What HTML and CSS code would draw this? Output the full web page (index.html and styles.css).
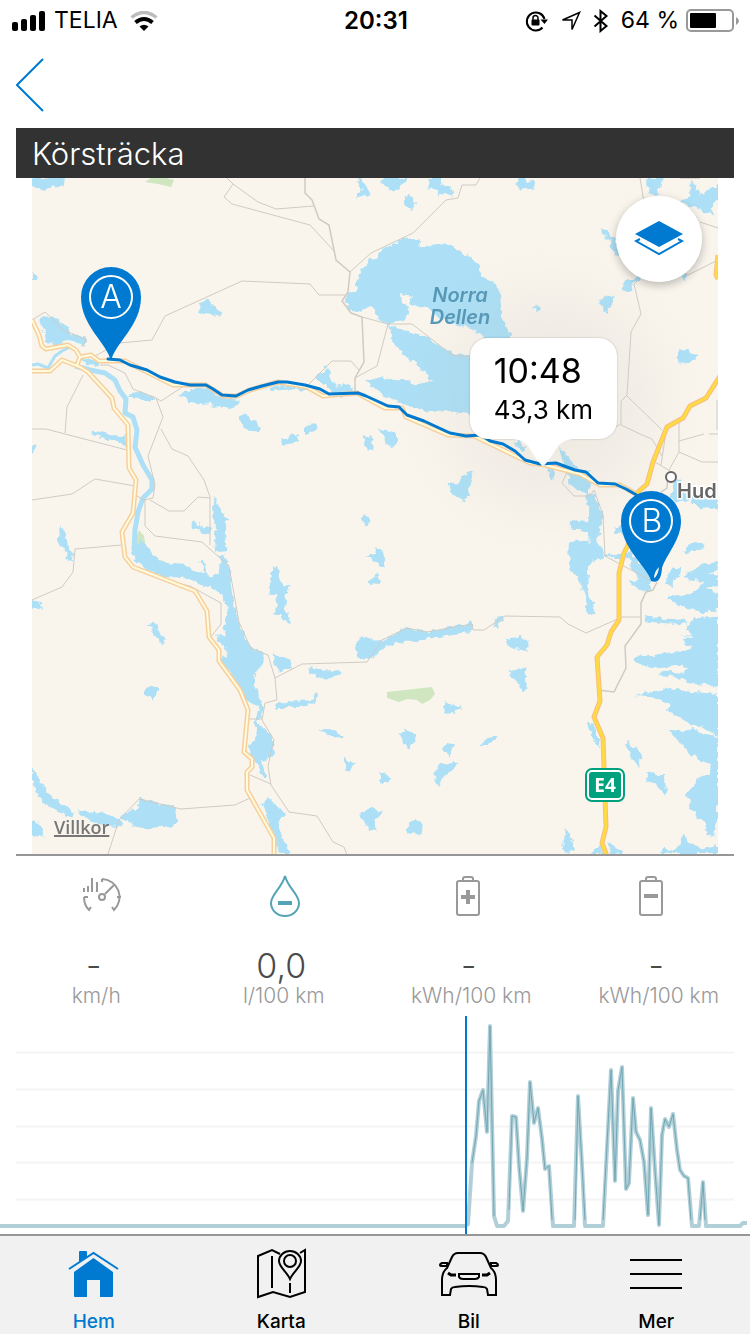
FILE: index.html
```html
<!DOCTYPE html>
<html lang="sv">
<head>
<meta charset="utf-8">
<meta name="viewport" content="width=device-width, initial-scale=1">
<title>Körsträcka</title>
<link rel="stylesheet" href="styles.css">
</head>
<body>
<div class="status">
  <div class="status-left">
    <svg width="34" height="20" viewBox="0 0 34 20" aria-hidden="true"><rect x="0" y="11" width="6" height="9" rx="2"/><rect x="9" y="8" width="6" height="12" rx="2"/><rect x="18" y="4" width="6" height="16" rx="2"/><rect x="27" y="0" width="6" height="20" rx="2"/></svg>
    <span>TELIA</span>
    <svg class="wifi" width="28" height="20" viewBox="0 0 28 20" aria-hidden="true"><path d="M1.500 6.500Q14-3.500 26.500 6.500" fill="none" stroke="#bdbdbd" stroke-width="3.500"/><path d="M5.500 11.500Q14 4.500 22.500 11.500" fill="none" stroke="#000" stroke-width="4"/><path d="M9.500 15.500Q14 12 18.500 15.500L14 20z"/></svg>
  </div>
  <time class="clock">20:31</time>
  <div class="status-right">
    <svg width="24" height="22" viewBox="0 0 24 22" aria-hidden="true"><path d="M17.500 17.500A9 9 0 1 1 19.500 9" fill="none" stroke="#000" stroke-width="2"/><path d="M15.500 9.500h7.500l-3.500 4.500z"/><rect x="6.500" y="9.500" width="8" height="6" rx="1"/><path d="M8 10V8a2.500 2.500 0 0 1 5 0v2" fill="none" stroke="#000" stroke-width="1.500"/></svg>
    <svg width="20" height="20" viewBox="0 0 20 20" aria-hidden="true"><path d="M1.500 9L18.500 1.500 11 18.500V9z" fill="none" stroke="#000" stroke-width="1.500"/></svg>
    <svg width="16" height="24" viewBox="0 0 16 24" aria-hidden="true"><path d="M1.500 6.500L13.500 17 7.500 22V2l6 5L1.500 17.500" fill="none" stroke="#000" stroke-width="2"/></svg>
    <span>64 %</span>
    <svg width="54" height="24" viewBox="0 0 54 24" aria-hidden="true"><rect x="1" y="1" width="46" height="21" rx="4" fill="none" stroke="#999" stroke-width="2"/><rect x="4" y="4" width="26" height="15" rx="1"/><path d="M50 8v8q6-4 0-8" fill="#999"/></svg>
  </div>
</div>
<header class="nav">
  <button class="back" aria-label="Tillbaka"><svg width="28" height="54" viewBox="0 0 28 54"><path d="M27 1L1 27l26 26" fill="none" stroke="#007ad0" stroke-width="2"/></svg></button>
</header>
<main>
  <h1 class="title">Körsträcka</h1>
  <section class="map-frame" aria-label="Karta">
    <div class="map">
      <svg class="map-art" viewBox="32 178 686 676">
        <defs>
          <radialGradient id="shade"><stop offset="0" stop-color="#a09a96" stop-opacity=".15"/><stop offset=".5" stop-color="#a09a96" stop-opacity=".08"/><stop offset="1" stop-color="#a09a96" stop-opacity="0"/></radialGradient>
          <filter id="shoreline" x="0" y="0" width="1" height="1"><feTurbulence type="fractalNoise" baseFrequency=".16" numOctaves="2" seed="4"/><feDisplacementMap in="SourceGraphic" scale="7" xChannelSelector="R" yChannelSelector="G"/></filter>
        </defs>
        <rect x="32" y="178" width="686" height="676" fill="#f9f5ed"/>
        <g fill="#cfe6c1">
          <path d="M151 178l-6 4 13 2 13 3 3-7-8-2zM139 530l5 6 1 7-4 8-5 1V538zM387 692l45-5 3 7-5 6-8 4-5-4-10-1-8 3-12-4z"/>
        </g>
        <g fill="#ade0f6" filter="url(#shoreline)">
          <path d="M32 178v9l5 1 6 2 6-2 9-1 6-2 1-7zM32 272l5 4v3h-5zM43 314l5 4 5-2 14 12 8 8h10l2 5-4 7-3-5-7-3-13 4h-8l-6-3-1-8-4-8zM82 358l8 1 8 3-3 4-8-1zM128 396l7-4 12 1 8 6-2 3h-8l-7-4zM178 396l10-5 10-3 10 1 10 7 14 2 8 3-4 5-6 3-15-3-10-2-15-2-4-4zM197 313l4-10 7-4 4 6 5 4 7 3-3 5-8-2-8-1z"/>
          <g transform="translate(240 178) scale(.33333)">
            <path d="M350 5l10-5 15 18 5 18 15 6-5 12-22 2-18 6 10-18 5-12zM422 8l8-8h68l5 10-20 16-25 12-18-14zM565 0h35l5 18 25 8 10 16-5 14-20-8-16 4-24-24-18 14 12-22zM492 62l22-8 14 22-15 24-18-12z"/>
            <path d="M480 190L490 182 510 178 535 188 540 205 575 203 620 197 640 208 690 238 715 260 720 285 745 305 765 315 780 345 784 400 796 440 815 480 770 510 735 480 720 465 690 450 650 440 600 420 575 400 545 385 520 385 505 375 512 360 495 350 483 348 486 375 510 388 500 420 470 432 440 438 410 422 405 395 385 388 367 392 362 403 330 398 318 370 320 345 350 335 352 305 370 265 385 248 408 242 415 222 440 205z"/>
            <path d="M445 440L500 460 560 475 600 505 640 528 700 530V712L620 697 560 700 500 682 440 655 400 630 378 607 420 597 500 607 530 620 575 610 555 580 490 530 455 485z"/>
            <path d="M225 590l20-5 15-20 10 15-2 16 20 30 25-8 28 10v22l-30 5-35-12-20-20-25-18zM90 625l50 0 60 5-20 8-40-3-50 3zM0 715l18-8 12 16 22 12 8 18-22 4-20-16-18 0zM192 755l14-16 22 4-6 14-14 12-14-2zM412 752l28 4 24 16-8 12h-16l-4-18z"/>
          </g>
          <g transform="translate(460 178) scale(.33333)">
            <path d="M165 15l20-15 18 6 16 4-4 30-14-8-20 3zM560 0h48l-4 30-18 22-20-6zM625 62l25 10 24-8 18-12-8-28 10-16 18 12-2 20 12 8 24-12 36-28v50l-22 20-4 34-20-6-20-12-22-10-36-10zM427 152l14 4 8 16 16 10 8 20 8 36-24-18-6-28-22-20zM490 312l28-10 18-12 14 8-30 20-4 16-22 4-4-10zM416 368l22-16 8 6 18-6-8 28-12 14-4 10-16-18zM220 390l12-10 12 6-4 8-14 8zM656 515l28-2 8 14 22 4-14 14-18 14-24-6zM660 285l14-4 8 14-8 12z"/>
          </g>
          <g transform="translate(20 400) scale(.33333)">
            <path d="M658 65l14-25 8 18 12 18 28 10-12 8-22-2-12-10zM215 92l30 4 30 10 40 2 8 26-16-2-28-12-22 4-12-10-30-12zM36 138l14-2-4 16-10 4zM120 378l16 22-4 18 14 24 16 18-4 26-14 0-8-12 4-18-18-20-8-22 8-14zM36 600l16 4 20 22-12 4-24-4zM383 680l16-16 10 10 12 24 14 22-20-2-8-20zM515 366l20 6 12 10 24-2v24l-16-4-22-12-18-6zM578 304l6-14 14 34 24 32-6 50 4 48-34 2-4-30 4-30-4-44z"/>
            <path d="M335 450L365 420 385 440 405 470 440 490 495 495 530 515 555 520 538 485 548 482 565 525 595 525 600 480 595 465 610 465 628 495 640 590 658 680 672 725H612L615 660 625 635 610 600 595 570 545 555 505 535 440 535 395 515 350 490z"/>
          </g>
          <g transform="translate(260 400) scale(.33333)">
            <path d="M64 118l18-2 14-14 14 4 8 14-20 10-32 4zM132 90l10-16 24-4 2 14-16 10-18 8zM312 108l14 4 16 6-10 16 10 18-16 0-12-20zM350 86l24 6 26 4 12 24-12 20-20-2-2-18-12-18zM564 248l18 4 14-2 14-24 14-6 18-8-8 24-8 22 4 28-16 4-8 10-30-22zM302 352l16-16 10 18-4 24-18-8zM315 470l30-6 4-22 14 6 12 26-2 30-18-14-20-12zM325 540l18-10 6-16 2 18 14 14-10 8-14 0zM38 500l14-2 2 36 14 22 22 0-8 14-8 60 16 26 2 16-24-8-4-20-20 0 6-40-2-18-20-2z"/>
            <path d="M295 718L310 708 345 722 380 718 438 682 500 695 550 685 622 672 630 660 640 690 600 702 545 710 500 718 440 725 380 735 350 765 325 780 295 770 285 745zM702 660l16-10 18 2-24 20-4 22-8-12zM740 715l40-4 28 14 0 20-40-8-26-10z"/>
          </g>
          <g transform="translate(500 400) scale(.33333)">
            <path d="M177 140l28 35 25 30 35 10 7 35-10 35-32-17-25-18-2-25-18-50zM145 205h20l-2 35-16-15zM255 290l20-15 25 45 12 35-12 35-10 40 20 25-2 20-28 10-15 15-3 60 13 40 12 40-27 0-5-50-15-45-25-35-10-50 2-35 28-5 35 5-5-25-25-10-25 0-5-30 30 2 25 3 5-30zM340 380l30-5 5 25-25 2zM310 460l40 2 35 0 10-22 5 30 40 40 15 35-10 35-35-20-25-15 35-5-30-40 5-20-35-5-45-5zM550 455l30-30 38 7-18 18-35 8zM505 290l25-55 15 5-5 30 35 20 79 10v28l-54-3-25-20-45 0zM40 125l20 0 20 20-12 8z"/>
            <path d="M500 550L505 520 520 505 545 500 540 525 515 545 520 562zM550 525L575 515 600 495 654 485V505L630 520 654 525V555L618 565 654 580V635L600 637 560 625 500 595 510 585 550 588 590 572 610 545 570 542zM385 540L420 548 455 560 445 580 410 565zM435 645L480 655 560 660V675L480 668 440 665zM535 700L575 705 560 688 575 655 654 650V780H400L480 765 560 762 570 735 545 718 580 712z"/>
          </g>
          <g transform="translate(20 630) scale(.33333)">
            <path d="M390 0h20l28 40-12 2-20-24zM372 182l8-14 38 8-18 30-22-10zM585 18L610 22 615 0H667L690 50 735 75 732 105 710 125 702 160 715 210 730 220 725 265 712 275 745 310 762 330 760 375 735 395 722 390 742 430 738 450 728 440 700 385 685 350 715 310 703 285 715 230 680 210 640 140 605 95 620 70 600 35zM757 66l20 14 40 12-2 22-32 8-20-20zM862 110l38 8 66 8-10 8-32 14-24-6-34-18zM768 224l52-10 62-4 8-24 4 6-4 24-30 12-60 6-32 0zM893 296l44 2 34 20-2 8-44-10zM972 386l14 10 24 4-14 12-4 14-20-6zM1006 45l20-24 24 6v62l-24-14zM36 410l24 40 20 36 50 40 34 22-14 14-40-22-40-20-34-54zM178 540l60 8 60 20 14 14-20 6-60-6-28-18-24-8zM300 562l50-30 8-28 50 12 60 14-2 20 10 24-24 14-80 8-44-16zM36 570l14 4 26 44-14 6-26-12zM724 520l14-18 24 14 36 36-24 20 8 40 30 60h-34l-14-46-18-50zM1020 550l30-18v64l-24-20z"/>
          </g>
          <g transform="translate(370 640) scale(.33333)">
            <path d="M405 0h30l34 12 4 22-24-4-30-8zM415 98l30-12 28-4-8 40 8 20-14 12-14-24-16-18zM221 188l20 8 34 4-24 18-26 4zM88 282l14-4 0-18 22 20 14 18-14 20-8 12-18-26zM217 324l20-14 14 4-6 24-6 16-10-16-12-6zM332 318l16-24 32-10-6 16-24 18zM190 402l20-30 54-4-14 20-32 24-10 32-14-26zM30 392l12 6 18 14-4 16-26 2zM0 500l14 4 22 10-8 18-14 8 2 28-16 4zM110 566l8-16 20-8 20 14-4 32-20-8-18 4zM765 303l20 12 30 20-10 50-20-25zM830 395l30 10 25 0 3 60-28-30-28-15zM585 565l15 25 15 40-25 8-15-13zM662 642l28-27 15 27zM715 605l45 35-40 2zM652 248l20 2 18 70-25-25z"/>
            <path d="M790 60L800 50 850 45 930 33 1000 30 945 12 950 0H1044V140L1000 135 960 130 920 110 870 105 880 95 945 98 955 85 920 78 860 85 800 70zM790 165L820 158 865 155 890 143 960 155 1044 162V290L1000 262 960 252 930 230 890 212 905 190 870 180 840 168zM895 268L940 275 965 262 1000 285 1044 290V540L1030 590 1005 588 1010 550 980 540 975 515 955 505 960 480 945 460 975 435 980 415 1020 402 1022 372 985 360 960 335 920 300zM870 642l10-22 20 15 30-15 10-40 20 30 40 15 44-10v27z"/>
          </g>
        </g>
        <g fill="none" stroke="#ade0f6" stroke-linejoin="round">
          <path d="M32 365l6-1 10 4 7-12 7-5 8-4" stroke-width="3"/>
          <path d="M75 366l15 4 15 3 10 7 5 11 6 8-1 14 8 4 4 13-2 17 8 18 9 15v9l-9 9-5 14-3 18-1 20" stroke-width="5"/>
        </g>
        <ellipse cx="550" cy="400" rx="150" ry="150" fill="url(#shade)"/>
        <g fill="none" stroke="#cfcbc3" stroke-width="1">
          <path d="M32 320l13-8 20 19 22 9-5 6M227 178l6 6-9 13 8 7 78 21 24 26M233 184l25 18 18 7 38-3M350 272l21-19 42-20 33-33 12-2 4-13h14l4-7M345 295h-26l-9-11-68-3-77 35-13 24-33 3-24 13M362 317l26 7h24l40 31 18 2M388 324l-11 42-22 12M309 384l23-23h19l8 9M83 375l-16 32-2 26M100 365h8l17 8 8 16 23 9 7 19-15 39 7 29-2 13-9 2-7-4M156 398l5 3 23-15M32 429h14l19 5 62 16M32 500l40-6 23-15 40 7M32 600l30-13 11-15 2-23 47-4M161 429l11 20 16 7 16 24 6 17v48M150 500l19 11h15l14-14 12 1M145 500v26l10 10 47 6 27 24 10 56 8 18 4 8 17 7 7 23 2 22-12 3-3 17 12 20-6 26 3 19 18 27 28 4 16 26 11 5 3 8M172 582l18 4 31 17v21l-11 14M275 678l27-14 65-2 15-22 25-12 20 4 45-8 1 6h11l21-14 55 1 8 7 18 9 36-16h18M250 719h12M250 775l21 9M108 854l11-34 20-21 42 10 54-4 15-7M640 178l4 24M637 281l-3 3 7 30-10 18-4 63-6 6v24l19 9 12 5 10 17M627 396l35 34M621 424l-15 8M718 260l-30 15-6-3M700 222l18 6M679 423v29l-10 18M679 441l25-7M709 434h9M679 452l23 10h16M717 400v30M655 462l15 9M666 432l-5 33M594 490l9 25 2 41 45 24M594 490l-4 6h-16l-12-13 6-13"/>
          <path d="M305 178v15l7 7 7 19 10 6 7 35 14 12-2 20-6 9 9 12 11 4 2 45-9 16v13M657 582l-4 8-7 2-5 11v21l-16 22 1 22-12 24-16-2M680 178h20M668 475l-1 13-6 4" stroke-width="1.500"/>
        </g>
        <g fill="none" stroke-linejoin="round">
          <path d="M32 320l7 15 3 11 4 3 22-4 8 5 4 7 11-2 8 6h26l48 24h33l17 11h14l13-6 28-8 29 5 16 9 34-3 28 15h17l4 9 42 18 26 1 23 11 33 16 15 2 35 9 20 11h20l16 9M32 371h18l12-11 18 7 8 5 24 26 2 10 14 17 1 43 7 12-3 33-11 19 3 25 8 10 62 24 12 20 2 26 10 13v11l21 29 8 20-4 42 8 7v8l-5 5v18l27 48v16M80 357l-3 8" stroke="#f7cf9d" stroke-width="5"/>
          <path d="M32 320l7 15 3 11 4 3 22-4 8 5 4 7 11-2 8 6h26l48 24h33l17 11h14l13-6 28-8 29 5 16 9 34-3 28 15h17l4 9 42 18 26 1 23 11 33 16 15 2 35 9 20 11h20l16 9M32 371h18l12-11 18 7 8 5 24 26 2 10 14 17 1 43 7 12-3 33-11 19 3 25 8 10 62 24 12 20 2 26 10 13v11l21 29 8 20-4 42 8 7v8l-5 5v18l27 48v16M80 357l-3 8" stroke="#fffbdc" stroke-width="2"/>
          <path d="M720 376l-14 22-16 8-7 12-16 9-14 35-6 22-9 8-10 53-4 8-5 20v47l-8 12-4 13-10 12 3 44-6 16 9 21 3 89-4 16 5 13M718 255l-2 20 2 4" stroke="#f7bd8a" stroke-width="5"/>
          <path d="M720 376l-14 22-16 8-7 12-16 9-14 35-6 22-9 8-10 53-4 8-5 20v47l-8 12-4 13-10 12 3 44-6 16 9 21 3 89-4 16 5 13M718 255l-2 20 2 4" stroke="#fedb3f" stroke-width="3"/>
          <path d="M108 359l12 1 10 5 17 5 13 7 15 5 15 3h16l7 4 9 6 14 1 12-6 14-4 16-4 9 0 18 3 15 4 9 5 29-1 8 3 22 10 11 1 8 8 17 6 26 12 16 3 15-1 9 6 13 3 12 7 10 9 15 4 16-1 19 7 11 2 12 11 17 1 11 5 14 8" stroke="#007ad0" stroke-width="3" stroke-linecap="round"/>
        </g>
        <circle cx="671" cy="477" r="5" fill="#fff" stroke="#666" stroke-width="2"/>
        <g class="place-label"><text x="677" y="498">Hud</text></g>
        <g class="lake-label"><text x="460" y="302">Norra</text><text x="460" y="324">Dellen</text></g>
        <rect x="586" y="769" width="38" height="32" rx="6" fill="#fff" stroke="#00a27e" stroke-width="2"/>
        <rect x="589" y="772" width="32" height="26" rx="3" fill="#00a27e"/>
        <text class="road-label" x="605" y="792">E4</text>
        <g class="pin"><path d="M111 361C107 343 81 326 81 297a30 30 0 0 1 60 0C141 326 115 343 111 361z"/><circle cx="111" cy="297" r="21"/><text x="111" y="308">A</text></g>
        <g class="pin"><path d="M651 581C648 567 621 549 621 521a30 30 0 0 1 60 0C681 540 666 555 662 568Q661 585 651 581z"/><circle cx="651" cy="521" r="21"/><text x="652" y="532">B</text><path d="M654 578q0-6 5-11q-1 9-5 11z" class="pin-gap"/></g>
      </svg>
      <button class="layers" aria-label="Kartlager"><svg width="50" height="38" viewBox="0 0 50 38"><path d="M1 14L25 1l24 13-24 13z" fill="#007ad0"/><path d="M6 19l-4 2 23 13 23-13-4-2" fill="none" stroke="#007ad0" stroke-width="2"/></svg></button>
      <div class="callout"><strong>10:48</strong><span>43,3 km</span><svg class="callout-tip" width="60" height="27" viewBox="0 0 60 27"><path d="M0 0Q10 1 15 7Q26 25 30 27Q34 25 45 7Q50 1 60 0z" fill="#fff"/></svg></div>
      <a class="terms" href="#villkor">Villkor</a>
    </div>
  </section>
  <section class="stats">
    <div class="stat-icons" aria-hidden="true">
      <svg width="44" height="44" viewBox="0 0 44 44" fill="none" stroke="#999" stroke-width="2"><path d="M4 14v4M8 12v6M12 4v14M17 8v10M22 8V5M22 5A18 18 0 0 1 34 36L32 33M41 23h-4M4 23h4M4 23q0 8 5 13l2-3M25 20l9-9"/><circle cx="22" cy="23" r="3"/></svg>
      <svg width="44" height="44" viewBox="0 0 44 44"><path d="M22 2C19 14 8 20 8 29a14 13 0 0 0 28 0C36 20 25 14 22 2z" fill="none" stroke="#55a3b6" stroke-width="2"/><path d="M15 29h14" stroke="#55a3b6" stroke-width="4"/></svg>
      <svg width="44" height="44" viewBox="0 0 44 44" fill="none" stroke="#999" stroke-width="2"><rect x="11" y="7" width="22" height="34" rx="2"/><path d="M17 7V5q0-2 2-2h6q2 0 2 2v2"/><path d="M15 23h14M22 16v14" stroke-width="4"/></svg>
      <svg width="44" height="44" viewBox="0 0 44 44" fill="none" stroke="#999" stroke-width="2"><rect x="11" y="7" width="22" height="34" rx="2"/><path d="M17 7V5q0-2 2-2h6q2 0 2 2v2"/><path d="M15 22h14" stroke-width="4"/></svg>
    </div>
    <ul class="stat-values">
      <li><span class="value">-</span><span class="unit">km/h</span></li>
      <li><span class="value">0,0</span><span class="unit">l/100 km</span></li>
      <li><span class="value">-</span><span class="unit">kWh/100 km</span></li>
      <li><span class="value">-</span><span class="unit">kWh/100 km</span></li>
    </ul>
  </section>
  <svg class="chart" viewBox="0 1016 750 218" role="img" aria-label="Förbrukning längs sträckan">
    <path d="M16 1052.500h718M16 1089.500h718M16 1126.500h718M16 1162.500h718M16 1199.500h718" stroke="#f4f4f4" stroke-width="2"/>
    <g fill="none" stroke-linejoin="round">
      <path d="M0 1226H465L468 1224 472 1163 476 1136 479 1101 483 1090 487 1132 490 1026 494 1216 497 1226H504L508 1221 512 1116 516 1117 519 1165 523 1211 527 1158 530 1082 534 1123 538 1108 542 1139 545 1169 549 1166 553 1226H574L578 1096 582 1165 585 1226H603L611 1070 615 1181 618 1091 622 1067 626 1189 629 1183 633 1098 636 1132 640 1140 644 1162 648 1215 651 1108 655 1170 659 1225 662 1135 665 1119 669 1127 673 1114 677 1150 680 1170 684 1176 688 1178 692 1226H699L703 1182 706 1226H740L743 1223H747" stroke="#b1cfd7" stroke-width="4"/>
      <path d="M472 1163L476 1136 479 1101 483 1090 487 1132 490 1026 494 1216M509 1210L512 1116 516 1117 519 1165 523 1211 527 1158 530 1082 534 1123 538 1108 542 1139 545 1169 549 1166 552 1220M575 1220L578 1096 582 1165 585 1220M603 1220L611 1070 615 1181 618 1091 622 1067 626 1189 629 1183 633 1098 636 1132 640 1140 644 1162 648 1215 651 1108 655 1170 659 1225 662 1135 665 1119 669 1127 673 1114 677 1150 680 1170 684 1176 688 1178 691 1220M700 1220L703 1182 705 1220" stroke="#71a7b5" stroke-width="1"/>
    </g>
    <path d="M466 1016v218" stroke="#007ad0" stroke-width="2"/>
  </svg>
</main>
<nav class="tabs">
  <a class="tab active" href="#hem"><svg width="56" height="56" viewBox="0 0 56 56"><path d="M8 26L27.500 12 47 26v24q0 1-1 1H34V34H21v17H9q-1 0-1-1z" fill="#007ad0"/><path d="M3 23L27.500 6.500 52 23" fill="none" stroke="#f1f1f1" stroke-width="6"/><path d="M13 16V6q0-1 1-1h6q1 0 1 1v5z" fill="#007ad0"/><path d="M3 23L27.500 7 52 23" fill="none" stroke="#007ad0" stroke-width="2"/></svg><span>Hem</span></a>
  <a class="tab" href="#karta"><svg width="56" height="56" viewBox="0 0 56 56" fill="none" stroke="#000" stroke-width="2"><path d="M27 8L19 4 5 10v41l15-5 17 5 15-5V4l-5 3M19 10v32M37 37v10"/><path d="M37 33C34 26 26 21 26 15a11 10 0 0 1 22 0C48 21 40 26 37 33z"/><circle cx="37" cy="15" r="6"/></svg><span>Karta</span></a>
  <a class="tab" href="#bil"><svg width="62" height="56" viewBox="-3 0 62 56" fill="none" stroke="#000" stroke-width="2"><path d="M17 7h22q4 0 6 4l5 11q5 4 5 12v15h-8l-1-6q-1-2-4-2-14-2-28 0-3 0-4 2l-1 6H1V34q0-8 5-12l5-11q2-4 6-4zM6 20H1q-2 0-2-1t2-2h5zM50 20h5q2 0 2-1t-2-2h-5zM18 28h20v3q-1 2-4 2H22q-3 0-4-2z"/><path d="M7 27l3 2h5M49 27l-3 2h-5" stroke-width="3"/></svg><span>Bil</span></a>
  <a class="tab" href="#mer"><svg width="56" height="56" viewBox="0 0 56 56"><path d="M2 14h52M2 28h52M2 42h52" stroke="#000" stroke-width="2"/></svg><span>Mer</span></a>
</nav>
</body>
</html>
```

FILE: styles.css
```css
* {
  box-sizing: border-box;
}

body {
  margin: 0;
  min-height: 100vh;
  display: flex;
  flex-direction: column;
  background: #fff;
  color: #000;
  font-family: Inter, "Liberation Sans", sans-serif;
}

svg {
  display: block;
  flex: none;
}

button {
  padding: 0;
  border: 0;
  background: none;
}

.status {
  display: grid;
  grid-template-columns: 1fr auto 1fr;
  align-items: center;
  height: 41px;
  padding: 0 10px 0 12px;
  font-size: 23px;
  line-height: 41px;
}

.status-left,
.status-right {
  display: flex;
  align-items: center;
}

.status-left {
  gap: 8px;
}

.wifi {
  margin-left: 4px;
}

.status-right {
  justify-content: flex-end;
  gap: 12px;
}

.status-right span {
  margin: 0 -5px 0 0;
}

.clock {
  font-size: 24px;
  font-weight: 600;
}

.nav {
  height: 87px;
  padding: 17px 16px;
}

.back {
  display: block;
}

main {
  flex: 1;
}

.title {
  margin: 0 16px;
  padding: 1px 16px 0;
  background: #323232;
  color: #fff;
  font-size: 31px;
  font-weight: 300;
  line-height: 49px;
}

.map-frame {
  margin: 0 16px;
  padding: 0 16px;
  border-bottom: 2px solid #969696;
}

.map {
  position: relative;
}

.map-art {
  width: 100%;
  height: auto;
}

.lake-label {
  fill: #5798b6;
  font-size: 20px;
  font-style: italic;
  font-weight: 600;
  text-anchor: middle;
}

.place-label {
  fill: #666;
  stroke: #fff;
  stroke-width: 3px;
  paint-order: stroke;
  font-size: 20px;
  font-weight: 600;
}

.road-label {
  fill: #fff;
  font-family: "Open Sans", sans-serif;
  font-size: 19px;
  font-weight: 700;
  text-anchor: middle;
}

.pin path {
  fill: #007ad0;
}

.pin circle {
  fill: none;
  stroke: #fff;
  stroke-width: 2px;
}

.pin text {
  fill: #fff;
  font-size: 32px;
  font-weight: 300;
  text-anchor: middle;
}

.pin .pin-gap {
  fill: #f9f5ed;
}

.layers {
  position: absolute;
  top: 18px;
  right: 16px;
  display: grid;
  place-items: center;
  width: 86px;
  height: 86px;
  border-radius: 50%;
  background: #fffffff7;
  box-shadow: 0 3px 10px #0004;
}

.callout {
  position: absolute;
  top: 23.700%;
  left: 63.800%;
  display: flex;
  flex-direction: column;
  padding: 12px 24px 11px;
  border-radius: 18px;
  background: #fff;
  box-shadow: 0 0 2px #0004;
  white-space: nowrap;
}

.callout strong {
  font-size: 34px;
  font-weight: 400;
  line-height: 42px;
}

.callout span {
  font-size: 26px;
  line-height: 36px;
}

.callout-tip {
  position: absolute;
  top: 100%;
  left: 50%;
  transform: translateX(-50%);
}

.terms {
  position: absolute;
  bottom: 14px;
  left: 22px;
  color: #777;
  font-family: "Open Sans", sans-serif;
  font-size: 18px;
  font-weight: 600;
  line-height: 26px;
  text-decoration-thickness: 2px;
}

.stat-icons,
.stat-values,
.tabs {
  display: grid;
  grid-template-columns: repeat(4, 1fr);
}

.stat-icons {
  justify-items: center;
  padding: 18px 8px 0 10px;
}

.stat-values {
  margin: 0;
  padding: 30px 0 8px;
  list-style: none;
  text-align: center;
}

.stat-values li {
  display: flex;
  flex-direction: column;
}

.value {
  color: #4a4a4a;
  font-size: 34px;
  font-weight: 300;
  line-height: 36px;
}

.unit {
  padding-left: 5px;
  color: #999;
  font-size: 21px;
  font-weight: 300;
  line-height: 24px;
}

.chart {
  width: 100%;
  height: auto;
}

.tabs {
  border-top: 2px solid #969696;
  background: #f1f1f1;
}

.tab {
  display: flex;
  flex-direction: column;
  align-items: center;
  gap: 8px;
  padding: 10px 0 0;
  color: #000;
  font-size: 19px;
  font-weight: 500;
  line-height: 24px;
  text-decoration: none;
}

.tab.active {
  color: #007ad0;
}
```
